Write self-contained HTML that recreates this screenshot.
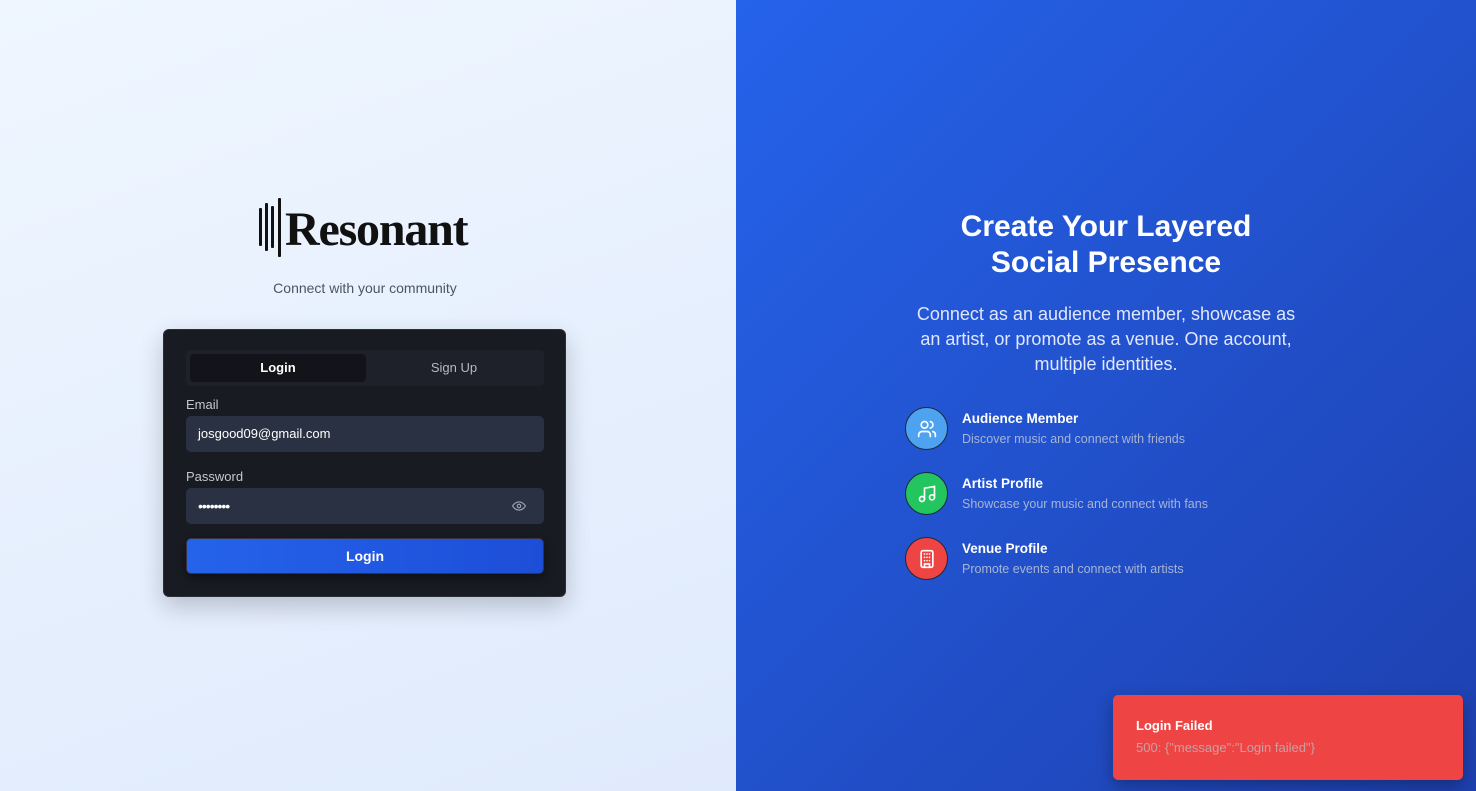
<!DOCTYPE html>
<html><head><meta charset="utf-8"><style>
*{margin:0;padding:0;box-sizing:border-box}
body{width:1476px;height:791px;overflow:hidden;font-family:"Liberation Sans",sans-serif;position:relative}
.left{position:absolute;left:0;top:0;width:736px;height:791px;background:linear-gradient(160deg,#eff6ff,#dfeafc)}
.right{position:absolute;left:736px;top:0;width:740px;height:791px;background:linear-gradient(135deg,#2563eb,#1e40af)}
.bar{position:absolute;background:#111;border-radius:1px;width:3px}
.logotext{position:absolute;left:285px;top:200px;font-family:"Liberation Serif",serif;font-weight:bold;font-size:48px;color:#111;letter-spacing:-1.2px;line-height:60px}
.sub{position:absolute;left:0;width:730px;top:280px;text-align:center;font-size:14px;color:#4b5563}
.card{position:absolute;left:163px;top:329px;width:403px;height:268px;background:#181b22;border-radius:6px;border:1px solid #2a2e37;box-shadow:0 10px 25px rgba(0,0,0,.2)}
.tabs{position:absolute;left:22px;top:20px;width:358px;height:36px;background:#1e2129;border-radius:4px}
.tab{position:absolute;top:4px;height:28px;width:176px;font-size:13px;text-align:center;line-height:28px}
.lbl{position:absolute;left:22px;font-size:13px;color:#c4c7cd}
.inp{position:absolute;left:22px;width:358px;height:36px;background:#2a3142;border-radius:5px;color:#fff;font-size:13px;line-height:36px;padding-left:12px}
.btn{position:absolute;left:22px;top:208px;width:358px;height:36px;border-radius:5px;background:linear-gradient(90deg,#2563eb,#1d4ed8);color:#fff;font-weight:bold;font-size:14px;text-align:center;line-height:35px;box-shadow:0 4px 10px rgba(0,0,0,.4);border:1px solid #334}
h1{position:absolute;left:736px;width:740px;top:209px;text-align:center;color:#fff;font-size:30px;line-height:36px;font-weight:bold}
.p{position:absolute;left:906px;width:400px;top:302px;text-align:center;color:#e0e7ff;font-size:18px;line-height:25px}
.feat{position:absolute;left:905px}
.ic{position:absolute;left:0;top:0;width:43px;height:43px;border-radius:50%;border:1px solid #1e293b;display:flex;align-items:center;justify-content:center}
.ft{position:absolute;left:57px;top:4px;white-space:nowrap;color:#fff;font-weight:bold;font-size:13.5px}
.fd{position:absolute;left:57px;top:25px;white-space:nowrap;color:#a5b4d6;font-size:12.5px}
.toast{position:absolute;left:1113px;top:695px;width:350px;height:85px;background:#ef4444;border-radius:5px;box-shadow:0 6px 16px rgba(0,0,0,.3)}
</style></head><body>
<div class="left">
 <div class="bar" style="left:259px;top:208px;height:38px"></div>
 <div class="bar" style="left:265px;top:203px;height:48px"></div>
 <div class="bar" style="left:271px;top:206px;height:42px"></div>
 <div class="bar" style="left:278px;top:198px;height:59px"></div>
 <div class="logotext">Resonant</div>
 <div class="sub">Connect with your community</div>
 <div class="card">
  <div class="tabs">
   <div class="tab" style="left:4px;background:#131419;color:#fff;font-weight:bold;border-radius:4px">Login</div>
   <div class="tab" style="left:180px;color:#b6b9c0">Sign Up</div>
  </div>
  <div class="lbl" style="top:67px">Email</div>
  <div class="inp" style="top:86px">josgood09@gmail.com</div>
  <div class="lbl" style="top:139px">Password</div>
  <div class="inp" style="top:158px;font-size:14px;letter-spacing:-1px">••••••••
   <svg style="position:absolute;right:18px;top:12px" width="14" height="12" viewBox="0 0 24 20" fill="none" stroke="#9ca3af" stroke-width="2"><path d="M1 10s4-7 11-7 11 7 11 7-4 7-11 7S1 10 1 10z"/><circle cx="12" cy="10" r="3"/></svg>
  </div>
  <div class="btn">Login</div>
 </div>
</div>
<div class="right"></div>
<h1>Create Your Layered<br>Social Presence</h1>
<div class="p">Connect as an audience member, showcase as an artist, or promote as a venue. One account, multiple identities.</div>
<div class="feat" style="top:407px"><div class="ic" style="background:#4ea3f0"><svg width="20" height="20" viewBox="0 0 24 24" fill="none" stroke="#fff" stroke-width="2" stroke-linecap="round"><path d="M16 21v-2a4 4 0 0 0-4-4H6a4 4 0 0 0-4 4v2"/><circle cx="9" cy="7" r="4"/><path d="M22 21v-2a4 4 0 0 0-3-3.9M16 3.1a4 4 0 0 1 0 7.8"/></svg></div><div class="ft">Audience Member</div><div class="fd">Discover music and connect with friends</div></div>
<div class="feat" style="top:472px"><div class="ic" style="background:#22c55e"><svg width="20" height="20" viewBox="0 0 24 24" fill="none" stroke="#fff" stroke-width="2" stroke-linecap="round"><path d="M9 18V5l12-2v13"/><circle cx="6" cy="18" r="3"/><circle cx="18" cy="16" r="3"/></svg></div><div class="ft">Artist Profile</div><div class="fd">Showcase your music and connect with fans</div></div>
<div class="feat" style="top:537px"><div class="ic" style="background:#ef4444"><svg width="20" height="20" viewBox="0 0 24 24" fill="none" stroke="#fff" stroke-width="2" stroke-linecap="round"><rect x="5" y="2" width="14" height="20" rx="2"/><path d="M9 22v-4h6v4M9 6h.01M12 6h.01M15 6h.01M9 10h.01M12 10h.01M15 10h.01M9 14h.01M12 14h.01M15 14h.01"/></svg></div><div class="ft">Venue Profile</div><div class="fd">Promote events and connect with artists</div></div>
<div class="toast">
 <div style="position:absolute;left:23px;top:23px;color:#fff;font-weight:bold;font-size:13px">Login Failed</div>
 <div style="position:absolute;left:23px;top:45px;color:#c8a0a4;font-size:13px">500: {"message":"Login failed"}</div>
</div>
</body></html>
